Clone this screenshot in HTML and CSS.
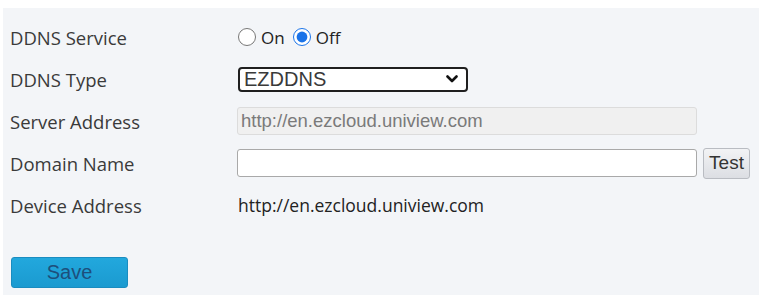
FILE: index.html
```html
<!DOCTYPE html>
<html>
<head>
<meta charset="utf-8">
<link rel="stylesheet" href="styles.css">
</head>
<body>
<div class="panel">
  <div class="form">
    <div class="label">DDNS Service</div>
    <div class="field radios">
      <label class="opt"><input type="radio" name="svc"> On</label>
      <label class="opt"><input type="radio" name="svc" checked> Off</label>
    </div>

    <div class="label">DDNS Type</div>
    <div class="field">
      <div class="select">
        <span>EZDDNS</span>
        <svg class="chev" width="12" height="8" viewBox="0 0 12 8"><path d="M1.5 1.5 L6 6 L10.5 1.5" fill="none" stroke="#111" stroke-width="2.6" stroke-linecap="round" stroke-linejoin="round"/></svg>
      </div>
    </div>

    <div class="label">Server Address</div>
    <div class="field">
      <input class="text disabled" type="text" value="http://en.ezcloud.uniview.com" disabled>
    </div>

    <div class="label">Domain Name</div>
    <div class="field">
      <input class="text" type="text" value="">
      <button class="test">Test</button>
    </div>

    <div class="label">Device Address</div>
    <div class="field value">http://en.ezcloud.uniview.com</div>
  </div>
  <button class="save">Save</button>
</div>
</body>
</html>
```

FILE: styles.css
```css
html, body {
  margin: 0;
  padding: 0;
  background: #ffffff;
}
body {
  width: 759px;
  height: 295px;
  overflow: hidden;
}
.panel {
  margin: 8px 0 0 3px;
  height: 287px;
  background: #f3f5f8;
  padding: 8px 0 0 7px;
  box-sizing: border-box;
}
.form {
  display: grid;
  grid-template-columns: 228px 1fr;
  grid-auto-rows: 42px;
}
.label {
  display: flex;
  align-items: center;
  font-family: "Open Sans", "Noto Sans", sans-serif;
  font-size: 18.5px;
  color: #3a3a3a;
}
.field {
  display: flex;
  align-items: center;
}
.radios {
  font-family: "Open Sans", "Noto Sans", sans-serif;
  font-size: 17px;
  color: #222;
  gap: 8px;
}
.opt {
  display: flex;
  align-items: center;
  gap: 5px;
}
.opt input {
  margin: 0;
  width: 18px;
  height: 18px;
  accent-color: #1a73e8;
}
.select {
  width: 230px;
  height: 25px;
  box-sizing: border-box;
  border: 2px solid #1f1f1f;
  border-radius: 4px;
  background: #fff;
  display: flex;
  align-items: center;
  justify-content: space-between;
  padding: 0 8px 0 4px;
  font-family: "Liberation Sans", Arial, sans-serif;
  font-size: 20px;
  color: #3a3a3a;
}
.chev {
  display: block;
}
.text {
  width: 460px;
  height: 28px;
  box-sizing: border-box;
  margin: 0 0 0 -1px;
  border: 1px solid #a9a9a9;
  border-radius: 3px;
  background: #fff;
  padding: 0 3px;
  font-family: "Liberation Sans", Arial, sans-serif;
  font-size: 18.5px;
  color: #333;
  outline: none;
}
.text.disabled {
  background: #f0f0f0;
  border-color: #dcdcdc;
  color: #7a7a7a;
}
.test {
  margin-left: 6px;
  width: 47px;
  height: 31px;
  box-sizing: border-box;
  border: 1px solid #b9bcc2;
  border-radius: 3px;
  background: linear-gradient(#f2f3f5, #dcdee3);
  font-family: "Liberation Sans", Arial, sans-serif;
  font-size: 19px;
  color: #333;
  padding: 0;
}
.value {
  font-family: "Open Sans", "Noto Sans", sans-serif;
  font-size: 17.5px;
  color: #222;
}
.save {
  margin-top: 31px;
  margin-left: 1px;
  width: 117px;
  height: 31px;
  border: 1px solid #1a8cc0;
  border-radius: 3px;
  background: linear-gradient(#22a8dd, #1b9ad0);
  font-family: "Liberation Sans", Arial, sans-serif;
  font-size: 20px;
  color: #1d4f7c;
  padding: 0;
}
```
